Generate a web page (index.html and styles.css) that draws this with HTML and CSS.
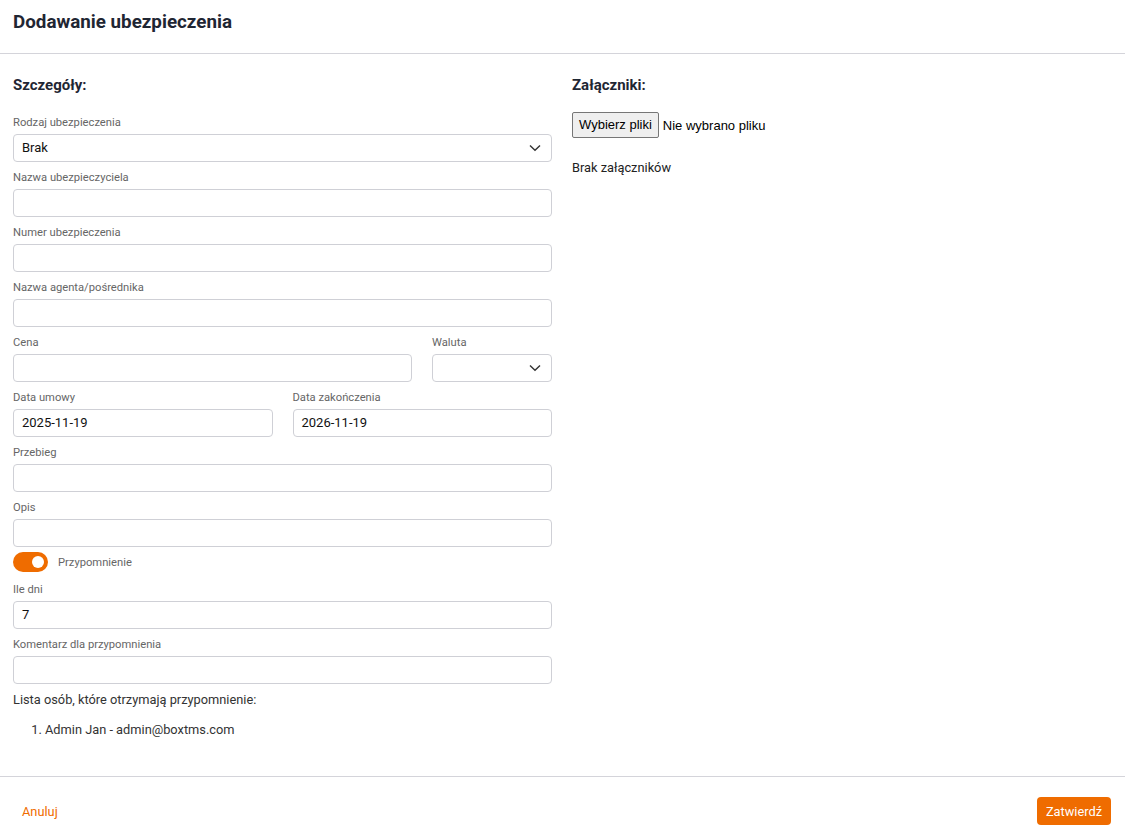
FILE: index.html
```html
<!DOCTYPE html>
<html lang="pl">
<head>
<meta charset="utf-8">
<title>Dodawanie ubezpieczenia</title>
<link rel="stylesheet" href="styles.css">
</head>
<body>
<div class="dialog">
  <header class="dialog-header">
    <h1 class="dialog-title">Dodawanie ubezpieczenia</h1>
  </header>
  <main class="dialog-body">
    <section class="col">
      <h2 class="section-title">Szczegóły:</h2>
      <div class="field">
        <label class="label">Rodzaj ubezpieczenia</label>
        <div class="input select"><span>Brak</span>
          <svg class="chev" width="12" height="8" viewBox="0 0 12 8"><path d="M1 1.5 L6 6.3 L11 1.5" fill="none" stroke="#333" stroke-width="1.4"/></svg>
        </div>
      </div>
      <div class="field">
        <label class="label">Nazwa ubezpieczyciela</label>
        <div class="input"></div>
      </div>
      <div class="field">
        <label class="label">Numer ubezpieczenia</label>
        <div class="input"></div>
      </div>
      <div class="field">
        <label class="label">Nazwa agenta/pośrednika</label>
        <div class="input"></div>
      </div>
      <div class="row">
        <div class="field grow">
          <label class="label">Cena</label>
          <div class="input"></div>
        </div>
        <div class="field currency">
          <label class="label">Waluta</label>
          <div class="input select"><span></span>
            <svg class="chev" width="12" height="8" viewBox="0 0 12 8"><path d="M1 1.5 L6 6.3 L11 1.5" fill="none" stroke="#333" stroke-width="1.4"/></svg>
          </div>
        </div>
      </div>
      <div class="row">
        <div class="field grow">
          <label class="label">Data umowy</label>
          <div class="input">2025-11-19</div>
        </div>
        <div class="field grow">
          <label class="label">Data zakończenia</label>
          <div class="input">2026-11-19</div>
        </div>
      </div>
      <div class="field">
        <label class="label">Przebieg</label>
        <div class="input"></div>
      </div>
      <div class="field">
        <label class="label">Opis</label>
        <div class="input"></div>
      </div>
      <div class="toggle-row">
        <span class="toggle"><span class="knob"></span></span>
        <span class="toggle-label">Przypomnienie</span>
      </div>
      <div class="field after-toggle">
        <label class="label">Ile dni</label>
        <div class="input">7</div>
      </div>
      <div class="field">
        <label class="label">Komentarz dla przypomnienia</label>
        <div class="input"></div>
      </div>
      <p class="list-title">Lista osób, które otrzymają przypomnienie:</p>
      <ol class="people">
        <li>Admin Jan - admin@boxtms.com</li>
      </ol>
    </section>
    <section class="col">
      <h2 class="section-title">Załączniki:</h2>
      <div class="file-row">
        <span class="file-btn">Wybierz pliki</span>
        <span class="file-name">Nie wybrano pliku</span>
      </div>
      <p class="no-files">Brak załączników</p>
    </section>
  </main>
  <footer class="dialog-footer">
    <button class="btn-text">Anuluj</button>
    <button class="btn-primary">Zatwierdź</button>
  </footer>
</div>
</body>
</html>
```
FILE: styles.css
```css
* { box-sizing: border-box; }
body {
  margin: 0;
  font-family: Roboto, "Noto Sans", sans-serif;
  color: #222;
  background: #fff;
}
.dialog-header {
  height: 54px;
  padding: 10px 13px 0;
  border-bottom: 1px solid #d4d4da;
}
.dialog-title {
  margin: 0;
  font-size: 18.8px;
  line-height: 24px;
  font-weight: 700;
  color: #1f2633;
}
.dialog-body {
  display: grid;
  grid-template-columns: 539px 539px;
  column-gap: 20px;
  padding: 21px 13px 0;
}
.section-title {
  margin: 0;
  font-size: 15px;
  line-height: 20px;
  font-weight: 700;
  color: #1f2633;
}
.col > .section-title + .field { margin-top: 20px; }
.field { display: flex; flex-direction: column; margin-top: 8px; }
.label {
  font-size: 11.2px;
  line-height: 16px;
  color: #666;
  margin-bottom: 3px;
}
.input {
  height: 28px;
  border: 1px solid #cfd0d6;
  border-radius: 4px;
  padding: 0 8px;
  font-size: 13px;
  line-height: 26px;
  color: #111;
  background: #fff;
}
.select { display: flex; justify-content: space-between; align-items: center; padding-right: 10px; }
.chev { display: block; }
.row { display: flex; gap: 20px; }
.row .field { margin-top: 8px; }
.grow { flex: 1; }
.currency { width: 120px; }
.toggle-row { display: flex; align-items: center; gap: 10px; margin-top: 5px; height: 20px; }
.toggle {
  width: 35px; height: 20px; border-radius: 10px;
  background: #ef6c00; position: relative; display: block;
}
.knob {
  position: absolute; width: 12px; height: 12px; border-radius: 50%;
  background: #fff; top: 4px; right: 4px;
}
.toggle-label { font-size: 11.2px; color: #666; }
.field.after-toggle { margin-top: 10px; }
.list-title {
  margin: 7px 0 0;
  font-size: 12.8px;
  line-height: 18px;
  color: #333;
}
.people {
  margin: 12px 0 0;
  padding-left: 32px;
  font-size: 12.8px;
  line-height: 18px;
  color: #333;
}
.file-row { display: flex; align-items: center; margin-top: 17px; }
.file-btn {
  height: 26px;
  padding: 0 6px;
  border: 1px solid #767676;
  border-radius: 2px;
  background: #efefef;
  font-family: "Liberation Sans", Arial, sans-serif;
  font-size: 13px;
  line-height: 24px;
  color: #000;
}
.file-name {
  margin-left: 4px;
  font-family: "Liberation Sans", Arial, sans-serif;
  font-size: 13px;
  color: #000;
}
.no-files { margin: 21px 0 0; font-size: 12.8px; line-height: 18px; color: #222; }
.dialog-footer {
  margin-top: 37px;
  border-top: 1px solid #d4d4da;
  padding: 20px 14px 0 13px;
  display: flex;
  justify-content: space-between;
}
.btn-text, .btn-primary {
  height: 28px;
  padding: 0 9px;
  border: 0;
  border-radius: 4px;
  font-family: Roboto, sans-serif;
  font-size: 12.8px;
  cursor: pointer;
}
.btn-text { background: transparent; color: #ef6c00; }
.btn-primary { background: #ef6c00; color: #fff; }
```
